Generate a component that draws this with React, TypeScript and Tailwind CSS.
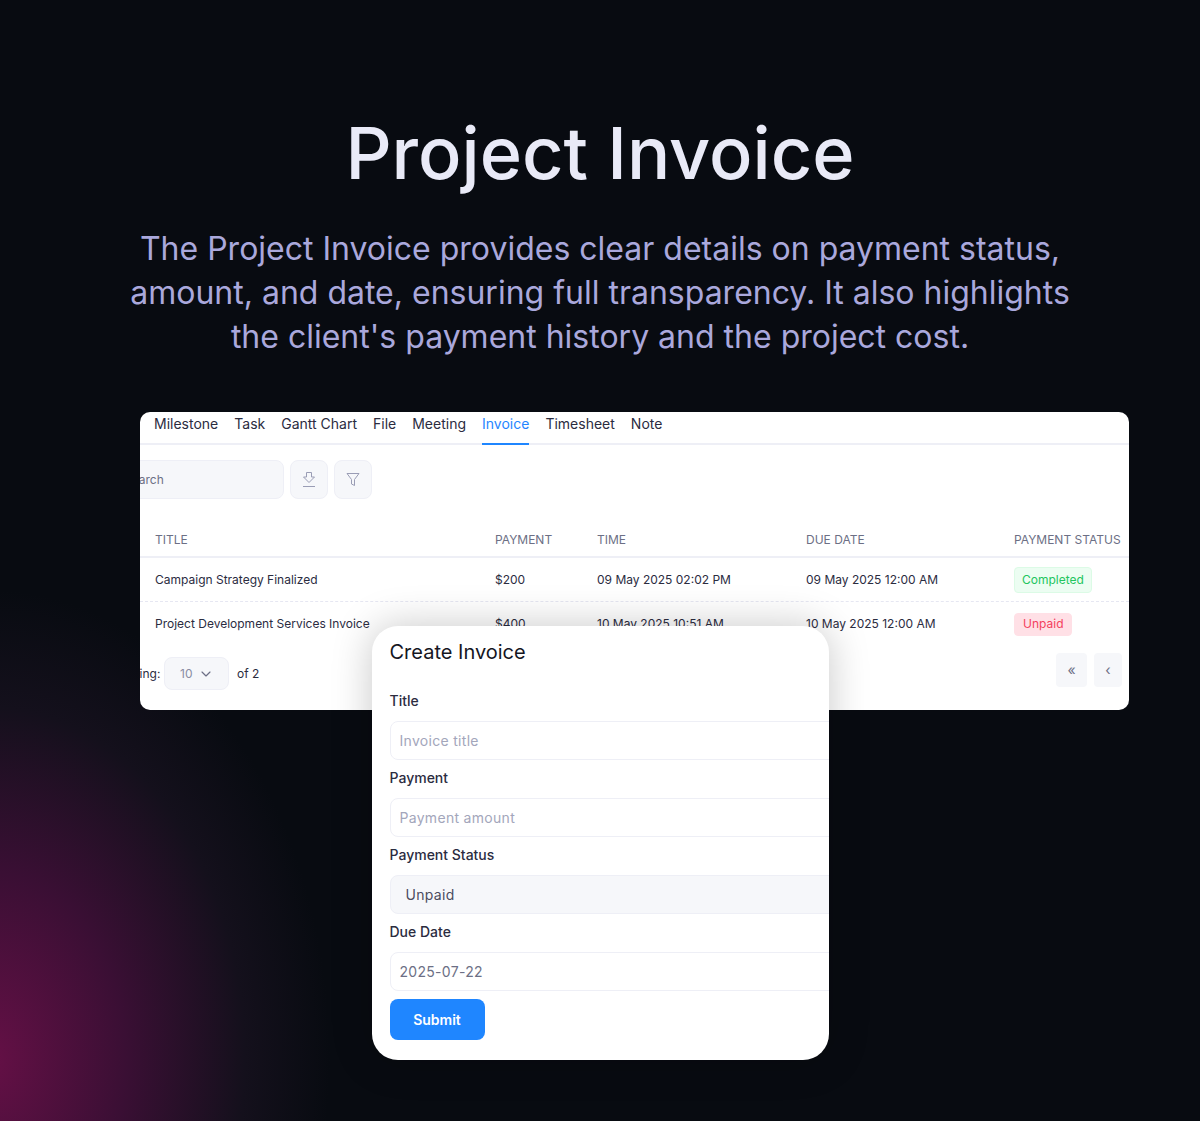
import { ChevronDown } from "lucide-react";

const tabs = ["Milestone", "Task", "Gantt Chart", "File", "Meeting", "Invoice", "Timesheet", "Note"];

const rows = [
  {
    title: "Campaign Strategy Finalized",
    payment: "$200",
    time: "09 May 2025 02:02 PM",
    due: "09 May 2025 12:00 AM",
    status: "Completed",
  },
  {
    title: "Project Development Services Invoice",
    payment: "$400",
    time: "10 May 2025 10:51 AM",
    due: "10 May 2025 12:00 AM",
    status: "Unpaid",
  },
];

function InvoiceTable() {
  return (
    <div className="h-[298px] w-[989px] overflow-hidden rounded-[10px] bg-white">
      <div className="flex h-[33px] gap-4 border-b-2 border-[#eeeff6] pl-[14px] text-sm leading-[24px] text-[#2b2c3f]">
        {tabs.map((t) => (
          <div
            key={t}
            className={t === "Invoice" ? "h-[33px] border-b-2 border-[#1f86ff] text-[#1f86ff]" : "h-[33px]"}
          >
            {t}
          </div>
        ))}
      </div>

      <div className="mt-[15px] flex h-[39px] gap-[6px]">
        <div className="-ml-[30px] flex h-[39px] w-[174px] items-center rounded-lg border border-[#eeeff6] bg-[#f6f7fa] pl-[13px] text-xs text-[#6c6f85]">
          Search
        </div>
        <div className="flex h-[39px] w-[38px] items-center justify-center rounded-lg border border-[#eeeff6] bg-[#f6f7fa]">
          <svg width="16" height="18" viewBox="0 0 16 18" fill="none" stroke="#9a9db5" strokeWidth="1" strokeLinejoin="round">
            <path d="M5.5 1.5h5v4.5h3L8 11.5 2.500 6h3z" />
            <path d="M2 15.500h12" />
          </svg>
        </div>
        <div className="flex h-[39px] w-[38px] items-center justify-center rounded-lg border border-[#eeeff6] bg-[#f6f7fa]">
          <svg width="14" height="15" viewBox="0 0 14 15" fill="none" stroke="#9a9db5" strokeWidth="1" strokeLinejoin="round">
            <path d="M1 1.500h12L8.500 7.500v6L5.500 12V7.500z" />
          </svg>
        </div>
      </div>

      <div className="mt-[28px] grid h-[31px] grid-cols-[340px_102px_209px_208px_1fr] border-b-2 border-[#eeeff6] pl-[15px] text-xs leading-[26px] text-[#6c6f85]">
        <div>TITLE</div>
        <div>PAYMENT</div>
        <div>TIME</div>
        <div>DUE DATE</div>
        <div>PAYMENT STATUS</div>
      </div>

      {rows.map((r, i) => (
        <div
          key={r.title}
          className={
            i === 0
              ? "grid h-[44px] grid-cols-[340px_102px_209px_208px_1fr] items-center border-b border-dashed border-[#e6e7f2] pl-[15px] text-xs text-[#2b2c3f]"
              : "grid h-[44px] grid-cols-[340px_102px_209px_208px_1fr] items-center pl-[15px] text-xs text-[#2b2c3f]"
          }
        >
          <div>{r.title}</div>
          <div>{r.payment}</div>
          <div>{r.time}</div>
          <div>{r.due}</div>
          <div>
            {r.status === "Completed" ? (
              <span className="inline-flex h-[26px] items-center rounded border border-[#dcfbe6] bg-[#ecfdf2] px-[7px] text-[#22c55e]">
                {r.status}
              </span>
            ) : (
              <span className="inline-flex h-[23px] items-center rounded border border-[#ffe0e6] bg-[#ffe0e6] px-2 text-[#f43f5e]">
                {r.status}
              </span>
            )}
          </div>
        </div>
      ))}

      <div className="mt-[4px] flex items-start justify-between pr-[7px]">
        <div className="mt-[7px] flex items-center text-xs text-[#2b2c3f]">
          <span className="-ml-[32px] w-[56px]">Showing:</span>
          <div className="flex h-[33px] w-[65px] items-center gap-[6px] rounded-lg border border-[#eeeff6] bg-[#f6f7fa] pl-[15px] text-[#8a8da3]">
            10
            <ChevronDown size={16} strokeWidth={1.75} className="text-[#6c6f85]" />
          </div>
          <span className="ml-2">of 2</span>
        </div>
        <div className="mt-[3px] flex gap-[7px] text-sm text-[#6c6f85]">
          <div className="flex h-[34px] w-[31px] items-center justify-center rounded bg-[#f6f7fa]">«</div>
          <div className="flex h-[34px] w-[28px] items-center justify-center rounded bg-[#f6f7fa]">‹</div>
        </div>
      </div>
    </div>
  );
}

function Field({ label, value, kind }: { label: string; value: string; kind: "placeholder" | "select" | "date" }) {
  const box =
    kind === "select"
      ? "bg-[#f6f7fa] pl-[15px] text-[#4b4c5f]"
      : kind === "date"
        ? "bg-white pl-[9px] text-[#6c6f85]"
        : "bg-white pl-[9px] text-[#a3a6bb]";
  return (
    <div className="flex flex-col">
      <div className="flex h-[19px] items-center text-sm font-medium text-[#2b2c3f]">{label}</div>
      <div className={`mt-[11px] flex h-[39px] w-[470px] items-center rounded-lg border border-[#eeeff6] text-sm tracking-[0.3px] ${box}`}>
        {value}
      </div>
    </div>
  );
}

function CreateInvoice() {
  return (
    <div className="absolute left-[232px] top-[214px] h-[434px] w-[457px] overflow-hidden rounded-[26px] bg-white pl-[17.500px] shadow-[0_0_40px_rgba(0,0,0,0.22)]">
      <h2 className="mt-[12px] h-[28px] text-xl leading-[28px] text-[#15161f]">Create Invoice</h2>
      <div className="mt-[25px] flex flex-col gap-[8px]">
        <Field label="Title" value="Invoice title" kind="placeholder" />
        <Field label="Payment" value="Payment amount" kind="placeholder" />
        <Field label="Payment Status" value="Unpaid" kind="select" />
        <Field label="Due Date" value="2025-07-22" kind="date" />
      </div>
      <button className="mt-[8px] h-[41px] w-[95px] rounded-lg bg-[#1f86ff] text-sm font-semibold text-white">Submit</button>
    </div>
  );
}

export default function App() {
  return (
    <div className="h-[1121px] w-full overflow-hidden bg-[#080b11] bg-[radial-gradient(ellipse_340px_470px_at_-10px_1060px,#651046_0%,#3a0f34_40%,#14101c_75%,#080b11_100%)] font-['Inter',sans-serif]">
      <div className="flex flex-col items-center pt-[107px] text-center">
        <h1 className="text-[72px] font-medium leading-[92px] text-[#e9eaf7]">Project Invoice</h1>
        <p className="mt-[28px] w-[980px] text-[32px] leading-[44px] text-[#aaa8dc]">
          The Project Invoice provides clear details on payment status, amount, and date, ensuring full transparency. It also highlights the client's payment history and the project cost.
        </p>
      </div>
      <div className="relative ml-[140px] mt-[53px] w-[989px]">
        <InvoiceTable />
        <CreateInvoice />
      </div>
    </div>
  );
}
